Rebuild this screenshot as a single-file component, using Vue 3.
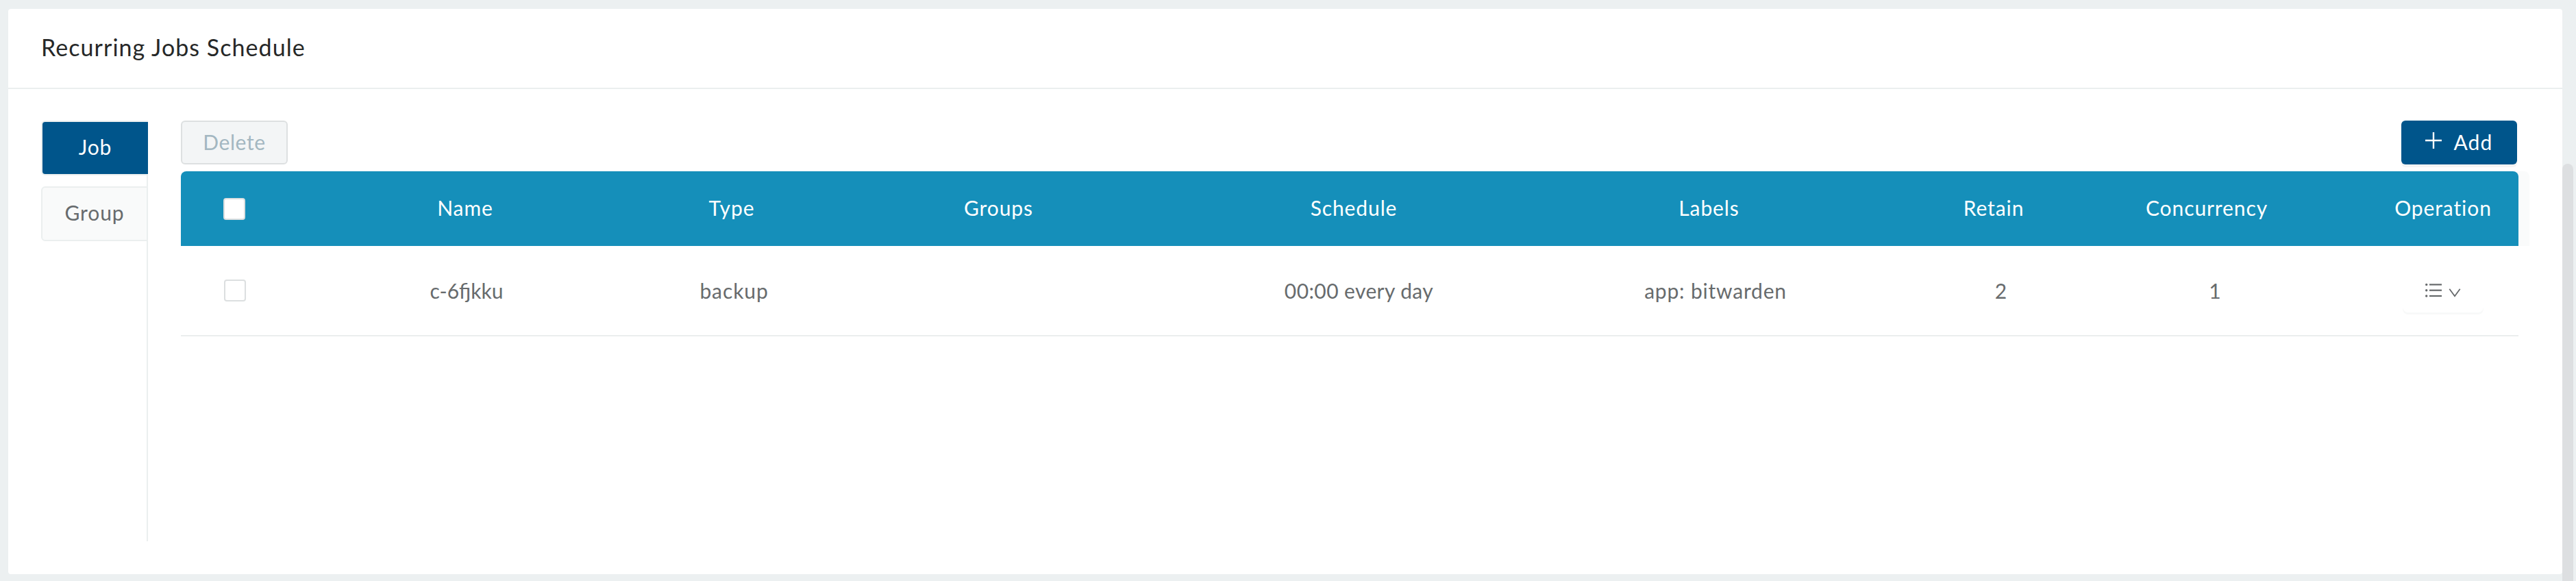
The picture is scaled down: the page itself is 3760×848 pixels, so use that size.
<template>
  <div class="page">
    <section class="card">
      <header class="card-head">
        <h2 class="title">Recurring Jobs Schedule</h2>
      </header>

      <div class="card-body">
        <nav class="tabs">
          <button
            v-for="tab in tabs"
            :key="tab"
            type="button"
            class="tab"
            :class="[tab.toLowerCase(), { active: tab === activeTab }]"
            @click="activeTab = tab"
          >
            <span>{{ tab }}</span>
          </button>
        </nav>

        <div class="content">
          <div class="toolbar">
            <button type="button" class="btn delete-btn" :disabled="!selected">
              <span>Delete</span>
            </button>
            <button type="button" class="btn add-btn">
              <svg class="plus" width="24" height="24" viewBox="0 0 24 24">
                <path d="M12 0v24M0 12h24" stroke="currentColor" stroke-width="2.4" />
              </svg>
              <span>Add</span>
            </button>
          </div>

          <div class="table-wrap">
            <div class="row head-row">
              <div class="cell check"><span class="checkbox"></span></div>
              <div
                v-for="col in columns"
                :key="col.key"
                class="cell"
                :class="col.key"
              >
                <span>{{ col.label }}</span>
              </div>
              <div class="cell operation"><span>Operation</span></div>
            </div>

            <div v-for="job in jobs" :key="job.name" class="row body-row">
              <div class="cell check">
                <span
                  class="checkbox"
                  @click="selected = selected ? null : job.name"
                ></span>
              </div>
              <div
                v-for="col in columns"
                :key="col.key"
                class="cell"
                :class="col.key"
              >
                <span>{{ job[col.key] }}</span>
              </div>
              <div class="cell operation">
                <button type="button" class="menu-btn">
                  <svg width="24" height="22" viewBox="0 0 24 22">
                    <g fill="currentColor">
                      <circle cx="1.7" cy="2.4" r="1.7" />
                      <circle cx="1.7" cy="10.7" r="1.7" />
                      <circle cx="1.7" cy="19" r="1.7" />
                      <rect x="6" y="1.3" width="18" height="2.2" />
                      <rect x="6" y="9.6" width="18" height="2.2" />
                      <rect x="6" y="17.9" width="18" height="2.2" />
                    </g>
                  </svg>
                  <svg class="chevron" width="18" height="13" viewBox="0 0 18 13">
                    <path
                      d="M1.3 0.8 9 11.2 16.7 0.8"
                      fill="none"
                      stroke="currentColor"
                      stroke-width="1.8"
                    />
                  </svg>
                </button>
              </div>
            </div>
          </div>
        </div>
      </div>
    </section>
    <div class="scrollbar"></div>
  </div>
</template>

<script setup>
import { ref } from "vue";

const tabs = ["Job", "Group"];
const activeTab = ref("Job");
const selected = ref(null);

const columns = [
  { key: "name", label: "Name" },
  { key: "type", label: "Type" },
  { key: "groups", label: "Groups" },
  { key: "schedule", label: "Schedule" },
  { key: "labels", label: "Labels" },
  { key: "retain", label: "Retain" },
  { key: "concurrency", label: "Concurrency" },
];

const jobs = ref([
  {
    name: "c-6fjkku",
    type: "backup",
    groups: "",
    schedule: "00:00 every day",
    labels: "app: bitwarden",
    retain: 2,
    concurrency: 1,
  },
]);
</script>

<style>
body {
  margin: 0;
  background: #ecf0f1;
}
</style>

<style scoped>
* {
  box-sizing: border-box;
}

.page {
  position: relative;
  height: 848px;
  padding: 13px 20px 10px 12px;
  overflow: hidden;
  background: #ecf0f1;
  font-family: Lato, sans-serif;
  font-size: 30px;
  color: #676b6d;
}

button {
  font-family: inherit;
  font-size: inherit;
  cursor: pointer;
}

.card {
  display: flex;
  flex-direction: column;
  height: 825px;
  background: #fff;
  border-radius: 4px;
}

.card-head {
  height: 117px;
  padding: 33px 48px 0;
  border-bottom: 2px solid #ebefef;
}

.title {
  margin: 0;
  font-size: 34px;
  font-weight: 400;
  line-height: 46px;
  letter-spacing: 1.05px;
  color: #262828;
}

.card-body {
  display: flex;
  flex: 1;
  padding: 46px 64px 48px 48px;
}

.tabs {
  display: flex;
  flex-direction: column;
  gap: 16px;
  width: 156px;
  border-right: 2px solid #ebefef;
}

.tab {
  width: 156px;
  height: 80px;
  padding: 0 0 4px;
  border: 2px solid #ebefef;
  border-radius: 6px 0 0 6px;
  background: #f9fafa;
  color: #676b6d;
  letter-spacing: 0.9px;
}

.tab.active {
  border-right: 0;
  background: #00558b;
  color: #fff;
}

.content {
  flex: 1;
  margin-left: 48px;
}

.toolbar {
  display: flex;
  justify-content: space-between;
  height: 74px;
  padding-right: 2px;
}

.btn {
  display: flex;
  align-items: center;
  justify-content: center;
  height: 64px;
  padding: 0 0 3px;
  border-radius: 6px;
  letter-spacing: 0.6px;
}

.delete-btn {
  width: 156px;
  border: 2px solid #dde0e1;
  background: #f3f5f6;
  color: #a3b7c1;
}

.add-btn {
  gap: 17px;
  width: 169px;
  border: 0;
  background: #00558b;
  color: #fff;
  letter-spacing: 1.2px;
  box-shadow: 0 4px 0 rgba(0, 0, 0, 0.045);
}

.plus {
  margin-top: -3px;
}

.row {
  display: grid;
}

.head-row {
  grid-template-columns: 156px 518px 260px 519px 518px 519px 312px 310px 1fr;
  height: 109px;
  border-radius: 8px 8px 0 0;
  background: #158fba;
  color: #fff;
  letter-spacing: 0.9px;
  box-shadow: 16px 0 0 #fafbfb;
}

.body-row {
  grid-template-columns: 157px 520px 261px 521px 521px 520px 313px 312px 1fr;
  height: 132px;
  border-bottom: 2px solid #ebeeee;
}

.cell {
  display: flex;
  align-items: center;
  justify-content: center;
}

.head-row .cell {
  padding-bottom: 3px;
}

.head-row .check {
  padding-bottom: 0;
}

.head-row .operation {
  padding-left: 80px;
}

.body-row .operation {
  padding-left: 66px;
}

.body-row .type {
  letter-spacing: 0.9px;
}

.body-row .schedule {
  letter-spacing: 0.4px;
}

.body-row .labels {
  letter-spacing: 0.8px;
}

.checkbox {
  width: 32px;
  height: 32px;
  border: 2px solid #dcdfe0;
  border-radius: 4px;
  background: #fff;
}

.menu-btn {
  display: flex;
  align-items: center;
  justify-content: center;
  gap: 10px;
  width: 118px;
  height: 64px;
  padding: 0;
  border: 0;
  border-radius: 8px;
  background: #fff;
  color: #66696b;
  box-shadow: 0 3px 0 #f8f9f9;
}

.chevron {
  margin-top: 6px;
}

.scrollbar {
  position: absolute;
  top: 239px;
  right: 4px;
  bottom: -16px;
  width: 16px;
  border-radius: 8px;
  background: #dddfe1;
}
</style>
